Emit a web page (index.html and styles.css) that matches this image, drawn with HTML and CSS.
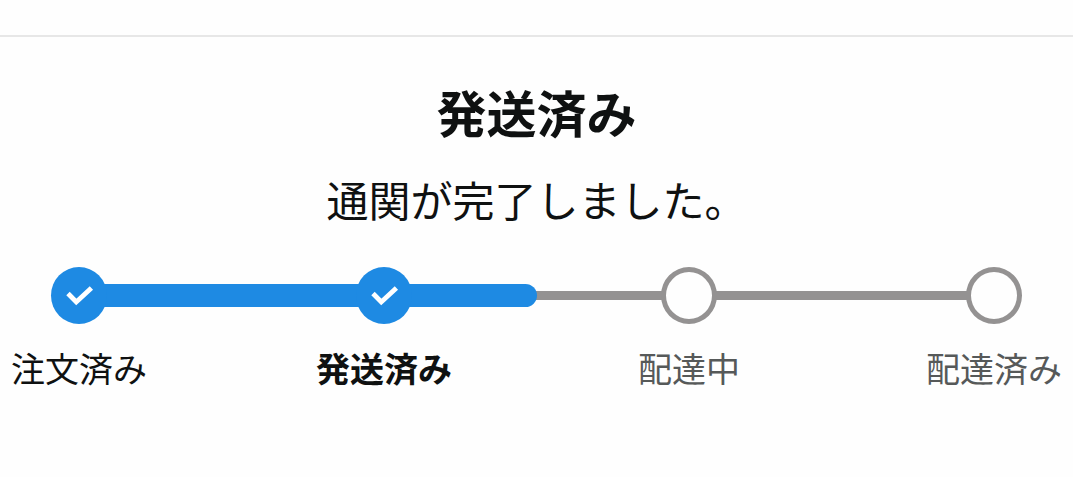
FILE: index.html
```html
<!DOCTYPE html>
<html lang="ja">
<head>
<meta charset="utf-8">
<meta name="viewport" content="width=device-width, initial-scale=1">
<title>配送状況</title>
<link rel="stylesheet" href="styles.css">
</head>
<body>
<main class="tracking">
  <h1 class="title">発送済み</h1>
  <p class="message">通関が完了しました。</p>
  <div class="tracker">
    <div class="rail"><div class="progress"></div></div>
    <ol class="steps">
      <li class="step done">
        <span class="marker"><svg class="check" viewBox="0 0 56 57" aria-hidden="true"><path d="M17 26.5L25.3 35L40.4 21"/></svg></span>
        <span class="label">注文済み</span>
      </li>
      <li class="step done current" aria-current="step">
        <span class="marker"><svg class="check" viewBox="0 0 56 57" aria-hidden="true"><path d="M17 26.5L25.3 35L40.4 21"/></svg></span>
        <span class="label">発送済み</span>
      </li>
      <li class="step">
        <span class="marker"></span>
        <span class="label">配達中</span>
      </li>
      <li class="step">
        <span class="marker"></span>
        <span class="label">配達済み</span>
      </li>
    </ol>
  </div>
</main>
</body>
</html>
```
FILE: styles.css
```css
body {
  margin: 0;
  background: #fefefe;
  color: #0f1111;
  font-family: "Noto Sans CJK JP", sans-serif;
}

.tracking {
  margin-top: 35px;
  border-top: 2px solid #e7e7e7;
  padding-top: 36px;
}

.title {
  margin: 0;
  font-size: 50px;
  line-height: 76px;
  font-weight: 700;
  text-align: center;
}

.message {
  margin: 18px 0 0;
  font-size: 42px;
  line-height: 64px;
  text-align: center;
}

.tracker {
  position: relative;
  margin: 36px 11px 0;
}

/* The rail runs behind the markers, from the first centre to the last. */
.rail {
  position: absolute;
  top: 24px;
  left: 68px;
  right: 68px;
  height: 9px;
  background: #949292;
}

.progress {
  width: 50%;
  height: 23px;
  margin-top: -7px;
  border-radius: 12px;
  background: #1e8ae3;
}

.steps {
  display: flex;
  justify-content: space-between;
  margin: 0;
  padding: 0;
  list-style: none;
}

.step {
  display: flex;
  flex-direction: column;
  align-items: center;
  position: relative;
  width: 136px;
  color: #565959;
}

.done {
  color: #0f1111;
}

.marker {
  box-sizing: border-box;
  width: 56px;
  height: 57px;
  border: 5px solid #949292;
  border-radius: 50%;
  background: #fefefe;
}

.done .marker {
  border: 0;
  background: #1e8ae3;
}

.check {
  display: block;
  fill: none;
  stroke: #fff;
  stroke-width: 4.8;
}

.label {
  margin-top: 19px;
  font-size: 34px;
  line-height: 50px;
  white-space: nowrap;
}

.current .label {
  font-weight: 700;
}
```
